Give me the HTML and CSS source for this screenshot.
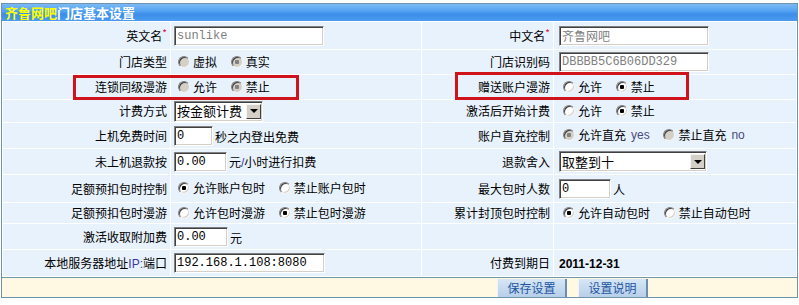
FILE: index.html
```html
<!DOCTYPE html>
<html lang="zh-CN">
<head>
    <meta charset="UTF-8">
    <title>门店基本设置</title>
    <link rel="stylesheet" href="styles.css">
</head>
<body>
    <div class="panel">
        <div class="panel-title"><span class="brand">齐鲁网吧</span>门店基本设置</div>

        <table class="form">
            <colgroup>
                <col class="c-label">
                <col class="c-value">
                <col class="c-label2">
                <col class="c-value2">
            </colgroup>
            <tr>
                <td class="label">英文名<em>*</em></td>
                <td class="value"><input type="text" class="field w150" value="sunlike" readonly></td>
                <td class="label">中文名<em>*</em></td>
                <td class="value right"><input type="text" class="field w150" value="齐鲁网吧" readonly></td>
            </tr>
            <tr>
                <td class="label">门店类型</td>
                <td class="value">
                    <label class="opt"><input type="radio" class="radio" name="type" disabled>虚拟</label>
                    <label class="opt"><input type="radio" class="radio" name="type" checked disabled>真实</label>
                </td>
                <td class="label">门店识别码</td>
                <td class="value right"><input type="text" class="field w150" value="DBBBB5C6B06DD329" readonly></td>
            </tr>
            <tr>
                <td class="label">连锁同级漫游</td>
                <td class="value">
                    <label class="opt"><input type="radio" class="radio" name="roam" disabled>允许</label>
                    <label class="opt"><input type="radio" class="radio" name="roam" checked disabled>禁止</label>
                </td>
                <td class="label">赠送账户漫游</td>
                <td class="value right">
                    <label class="opt"><input type="radio" class="radio" name="gift">允许</label>
                    <label class="opt"><input type="radio" class="radio" name="gift" checked>禁止</label>
                </td>
            </tr>
            <tr>
                <td class="label">计费方式</td>
                <td class="value">
                    <div class="select w89"><span class="select-text">按金额计费</span><span class="select-btn"></span></div>
                </td>
                <td class="label">激活后开始计费</td>
                <td class="value right">
                    <label class="opt"><input type="radio" class="radio" name="active">允许</label>
                    <label class="opt"><input type="radio" class="radio" name="active" checked>禁止</label>
                </td>
            </tr>
            <tr>
                <td class="label">上机免费时间</td>
                <td class="value"><div class="line"><input type="text" class="field w39" value="0"><span class="unit">秒之内登出免费</span></div></td>
                <td class="label">账户直充控制</td>
                <td class="value right">
                    <label class="opt"><input type="radio" class="radio" name="charge" checked disabled>允许直充<span class="hint">yes</span></label>
                    <label class="opt"><input type="radio" class="radio" name="charge" disabled>禁止直充<span class="hint">no</span></label>
                </td>
            </tr>
            <tr>
                <td class="label">未上机退款按</td>
                <td class="value"><div class="line"><input type="text" class="field w53" value="0.00"><span class="unit">元<span class="latin">/</span>小时进行扣费</span></div></td>
                <td class="label">退款舍入</td>
                <td class="value right">
                    <div class="select w148"><span class="select-text">取整到十</span><span class="select-btn"></span></div>
                </td>
            </tr>
            <tr>
                <td class="label">足额预扣包时控制</td>
                <td class="value">
                    <label class="opt"><input type="radio" class="radio" name="prepay" checked>允许账户包时</label>
                    <label class="opt"><input type="radio" class="radio" name="prepay">禁止账户包时</label>
                </td>
                <td class="label">最大包时人数</td>
                <td class="value right"><div class="line"><input type="text" class="field w52" value="0"><span class="unit">人</span></div></td>
            </tr>
            <tr>
                <td class="label">足额预扣包时漫游</td>
                <td class="value">
                    <label class="opt"><input type="radio" class="radio" name="preroam">允许包时漫游</label>
                    <label class="opt"><input type="radio" class="radio" name="preroam" checked>禁止包时漫游</label>
                </td>
                <td class="label">累计封顶包时控制</td>
                <td class="value right">
                    <label class="opt"><input type="radio" class="radio" name="cap" checked>允许自动包时</label>
                    <label class="opt"><input type="radio" class="radio" name="cap">禁止自动包时</label>
                </td>
            </tr>
            <tr>
                <td class="label">激活收取附加费</td>
                <td class="value"><div class="line"><input type="text" class="field w54" value="0.00"><span class="unit">元</span></div></td>
                <td class="label"></td>
                <td class="value right"></td>
            </tr>
            <tr>
                <td class="label">本地服务器地址<span class="latin">IP:</span>端口</td>
                <td class="value"><input type="text" class="field w151" value="192.168.1.108:8080"></td>
                <td class="label">付费到期日</td>
                <td class="value right"><span class="date">2011-12-31</span></td>
            </tr>
        </table>

        <div class="panel-foot">
            <button class="btn">保存设置</button>
            <button class="btn">设置说明</button>
        </div>

        <!-- annotation boxes -->
        <div class="mark mark-a"></div>
        <div class="mark mark-b"></div>
    </div>
</body>
</html>
```

FILE: styles.css
```css
body {
    margin: 0;
    background: #fff;
    font-family: "Noto Sans CJK SC", sans-serif;
    font-size: 12px;
    line-height: 16px;
    color: #000;
}
.panel {
    position: relative;
    width: 795px;
    margin: 3px 0 0 1px;
    border: 1px solid #6f93ad;
}
.panel-title {
    height: 17px;
    line-height: 17px;
    padding-left: 3px;
    font-size: 13px;
    font-weight: bold;
    color: #fff;
    background: linear-gradient(#7cbaf5, #55a4f2 40%, #3b8de8 60%, #4a9bf0);
}
.panel-title .brand {
    color: #ffff00;
}
.form {
    width: 795px;
    table-layout: fixed;
    border-spacing: 1px;
    background: #fff;
}
.c-label { width: 167px; }
.c-value { width: 250px; }
.c-label2 { width: 131px; }
.c-value2 { width: 242px; }
.form td {
    padding: 0;
    background: #e8f2fc;
    vertical-align: middle;
    white-space: nowrap;
}
.form tr:nth-child(1) td { height: 27px; }
.form tr:nth-child(2) td { height: 24px; }
.form tr:nth-child(3) td { height: 24px; }
.form tr:nth-child(4) td { height: 22px; }
.form tr:nth-child(5) td { height: 25px; }
.form tr:nth-child(6) td { height: 25px; }
.form tr:nth-child(7) td { height: 27px; }
.form tr:nth-child(8) td { height: 20px; }
.form tr:nth-child(9) td { height: 25px; }
.form tr:nth-child(10) td { height: 26px; }
.form .label {
    text-align: right;
    padding-right: 3px;
}
.form .label em {
    font-style: normal;
    font-size: 10px;
    color: #d0103a;
    vertical-align: top;
    line-height: 10px;
}
.form .value {
    padding-left: 3px;
}
.form .value.right {
    padding-left: 5px;
}
.line {
    display: flex;
    align-items: flex-end;
}
.unit {
    padding-left: 2px;
    line-height: 16px;
    margin-bottom: 1px;
}
.latin {
    font-family: "Liberation Sans", sans-serif;
    color: #3a3aa6;
}
.field {
    box-sizing: border-box;
    display: block;
    height: 20px;
    margin: 0;
    padding: 0 2px;
    border: 1px solid;
    border-color: #808080 #fff #fff #808080;
    box-shadow: inset 1px 1px 0 #404040, inset -1px -1px 0 #d4d0c8;
    background: #fff;
    font-family: "Liberation Mono", "Noto Sans CJK SC", monospace;
    font-size: 12px;
    color: #000;
    outline: none;
}
.field[readonly] {
    color: #808080;
}
.w39 { width: 39px; }
.w52 { width: 52px; }
.w53 { width: 53px; }
.w54 { width: 54px; }
.w150 { width: 150px; }
.w151 { width: 151px; }
.opt {
    display: inline-flex;
    align-items: center;
    margin-right: 7px;
}
.radio {
    -webkit-appearance: none;
    appearance: none;
    box-sizing: border-box;
    width: 12px;
    height: 12px;
    margin: 0 3px 0 4px;
    border-radius: 50%;
    border: 1px solid;
    border-color: #808080 #f4f4f4 #f4f4f4 #808080;
    box-shadow: inset 1px 1px 0 #404040, inset -1px -1px 0 #d4d0c8;
    background: #fff;
}
.radio:checked {
    background: radial-gradient(circle, #000 0 2px, #fff 2.5px);
}
.radio:disabled {
    background: #d4d0c8;
}
.radio:disabled:checked {
    background: radial-gradient(circle, #808080 0 2px, #d4d0c8 2.5px);
}
.hint {
    font-family: "Liberation Sans", sans-serif;
    color: #4a4a80;
    margin-left: 5px;
}
.select {
    box-sizing: border-box;
    display: flex;
    align-items: center;
    height: 21px;
    padding-left: 2px;
    border: 1px solid;
    border-color: #808080 #fff #fff #808080;
    box-shadow: inset 1px 1px 0 #404040, inset -1px -1px 0 #d4d0c8;
    background: #fff;
    font-size: 13px;
}
.w89 { width: 89px; }
.w148 { width: 148px; }
.select-text {
    flex: 1;
}
.select-btn {
    box-sizing: border-box;
    display: flex;
    align-items: center;
    justify-content: center;
    width: 15px;
    height: 15px;
    margin-right: 1px;
    border: 1px solid;
    border-color: #f4f4f4 #404040 #404040 #f4f4f4;
    background: #d4d0c8;
}
.select-btn::after {
    content: "";
    border-left: 4px solid transparent;
    border-right: 4px solid transparent;
    border-top: 4px solid #000;
}
.date {
    font-family: "Liberation Sans", sans-serif;
    font-weight: bold;
}
.panel-foot {
    display: flex;
    gap: 11px;
    height: 18px;
    padding: 1px 0 0 495px;
    border-top: 1px solid #6e98a8;
    background: #fff8e2;
}
.btn {
    width: 70px;
    height: 18px;
    padding: 0;
    border: 0;
    border-left: 1px solid #eef4fa;
    border-right: 2px solid #6d8db0;
    background: linear-gradient(#d6e6f6, #b8cfe9);
    color: #2355a0;
    font-family: "Noto Sans CJK SC", sans-serif;
    font-size: 12px;
    line-height: 16px;
}
.mark {
    position: absolute;
    box-sizing: border-box;
    border: 3px solid #d0121b;
}
.mark-a {
    left: 71px;
    top: 71px;
    width: 226px;
    height: 25px;
}
.mark-b {
    left: 453px;
    top: 68px;
    width: 234px;
    height: 28px;
}
```
